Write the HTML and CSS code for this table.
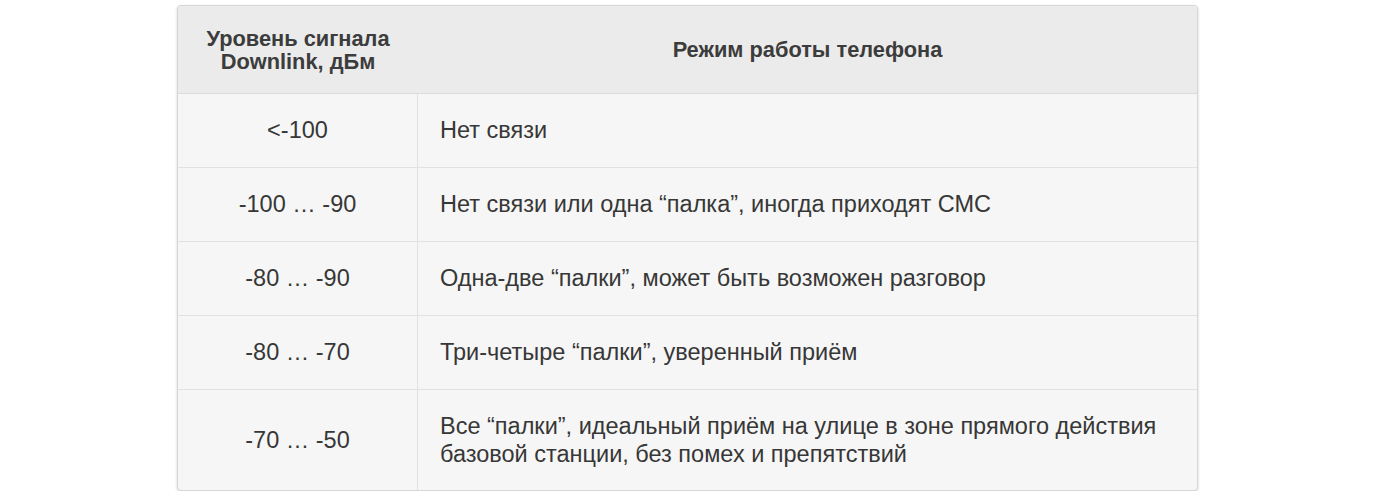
FILE: index.html
```html
<!DOCTYPE html>
<html lang="ru">
<head>
<meta charset="utf-8">
<link rel="stylesheet" href="styles.css">
</head>
<body>
<div class="wrap">
  <table class="sig">
    <thead>
      <tr>
        <th class="c1">Уровень сигнала<br>Downlink, дБм</th>
        <th class="c2">Режим работы телефона</th>
      </tr>
    </thead>
    <tbody>
      <tr><td class="c1">&lt;-100</td><td class="c2">Нет связи</td></tr>
      <tr><td class="c1">-100 … -90</td><td class="c2">Нет связи или одна “палка”, иногда приходят СМС</td></tr>
      <tr><td class="c1">-80 … -90</td><td class="c2">Одна-две “палки”, может быть возможен разговор</td></tr>
      <tr><td class="c1">-80 … -70</td><td class="c2">Три-четыре “палки”, уверенный приём</td></tr>
      <tr><td class="c1">-70 … -50</td><td class="c2">Все “палки”, идеальный приём на улице в зоне прямого действия<br>базовой станции, без помех и препятствий</td></tr>
    </tbody>
  </table>
</div>
</body>
</html>
```

FILE: styles.css
```css
html, body {
  margin: 0;
  padding: 0;
  background: #fff;
}
body {
  font-family: "Liberation Sans", Arial, sans-serif;
  color: #373737;
}
.wrap {
  padding: 5px 0 0 177px;
}
.sig {
  width: 1021px;
  border-collapse: separate;
  border-spacing: 0;
  border: 1px solid #d6d6d6;
  border-radius: 4px;
  box-shadow: 0 1px 3px rgba(0, 0, 0, 0.18);
  overflow: hidden;
  background: #f6f6f6;
}
.sig th {
  background: #ebebeb;
  color: #3c3c3c;
  font-size: 21.8px;
  font-weight: bold;
  line-height: 23px;
  height: 88px;
  padding: 0 10px;
  box-sizing: border-box;
  border-bottom: 1px solid #dcdcdc;
  text-align: center;
  vertical-align: middle;
}
.sig td {
  font-size: 23.5px;
  line-height: 29px;
  padding: 22px 22px;
  border-top: 1px solid #e2e2e2;
  vertical-align: middle;
}
.sig tbody tr:first-child td {
  border-top: none;
}
.sig tbody tr:last-child td {
  line-height: 28px;
}
.sig td.c1 {
  width: 240px;
  box-sizing: border-box;
  text-align: center;
  border-right: 1px solid #e2e2e2;
}
.sig th.c1 {
  width: 240px;
}
.sig td.c2 {
  text-align: left;
}
```
